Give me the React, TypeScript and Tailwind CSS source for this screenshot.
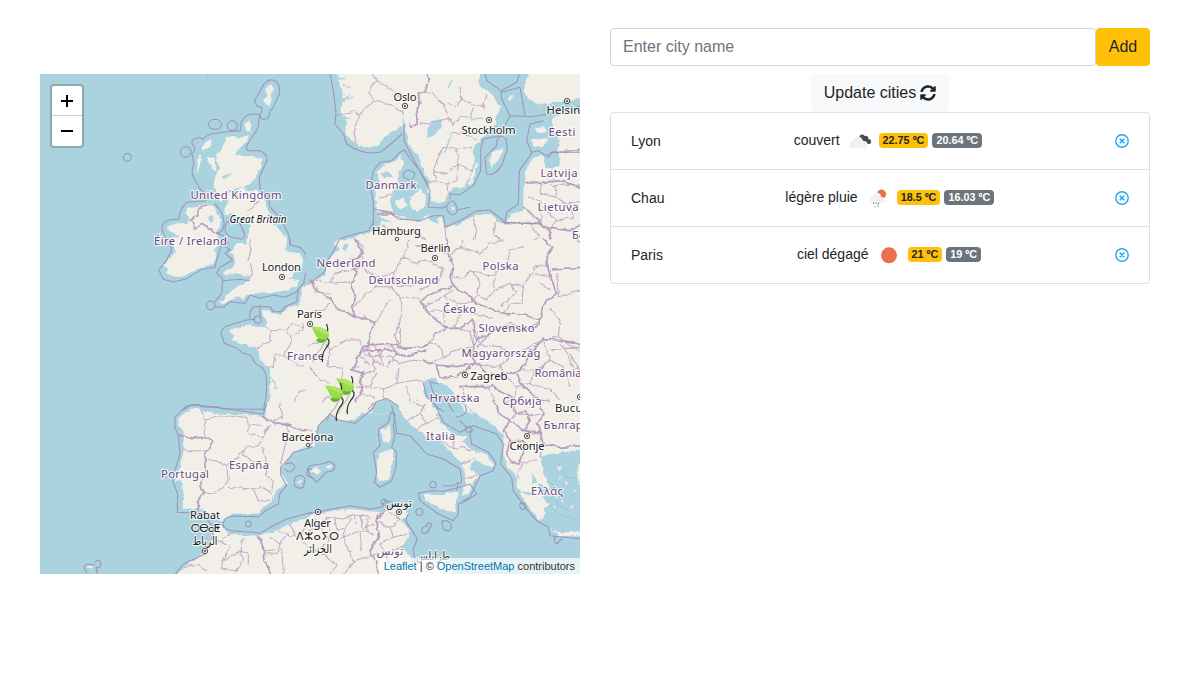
import React from "react";
import { FaSyncAlt } from "react-icons/fa";

const Tile = ({ x, y, land, water, sea, border, strong, rivers }: {
  x: number; y: number; land: string; water?: string; sea: string; border: string; strong?: string; rivers?: string;
}) => (
  <g transform={`translate(${x} ${y})`} fill="none" strokeLinejoin="round" strokeLinecap="round">
    <g filter="url(#coast)">
      <path d={land} fill="#f2efe9" />
      {water && <path d={water} fill="#aad3df" />}
      {rivers && <path d={rivers} stroke="#aad3df" strokeWidth="4" />}
      <path d={border} stroke="#c5abc8" strokeWidth="3.2" />
      {strong && <path d={strong} stroke="#b79dbb" strokeWidth="5" />}
    </g>
    <path d={sea} stroke="#998fb2" strokeWidth="3.2" strokeOpacity=".9" />
  </g>
);

type Label = [string, number, number, number];

/* text, centre x, baseline, drawn width */
const countries: Label[] = [
  ["United Kingdom", 196, 125, 91],
  ["Éire / Ireland", 150.5, 171, 73],
  ["Danmark", 351, 115, 51],
  ["Nederland", 306, 193, 59],
  ["Deutschland", 363.5, 210, 70],
  ["Polska", 460.5, 196, 36],
  ["Česko", 419.5, 239, 33],
  ["Slovensko", 466.5, 258, 56],
  ["Magyarország", 461, 283, 79],
  ["France", 265.5, 286, 37],
  ["Hrvatska", 414.5, 328, 50],
  ["Србија", 482, 331, 39],
  ["România", 518, 303, 47],
  ["България", 530, 355, 53],
  ["Italia", 400.5, 366, 29],
  ["Ελλάς", 507, 421, 32],
  ["España", 209, 395, 40],
  ["Portugal", 145, 404, 48],
  ["Eesti", 522, 62, 27],
  ["Latvija", 519, 103, 37],
  ["Lietuva", 518, 137, 41],
  ["Беларусь", 557, 165, 50],
  ["تونس", 350, 480.5, 27],
];

const cities: Label[] = [
  ["Oslo", 365, 27, 23],
  ["Stockholm", 448.5, 60, 54],
  ["Helsinki", 528, 40, 43],
  ["Hamburg", 356.5, 161, 49],
  ["Berlin", 395.5, 178, 30],
  ["London", 241.5, 197, 39],
  ["Paris", 269.5, 244, 25],
  ["Zagreb", 449, 306, 37],
  ["Barcelona", 267.5, 367, 52],
  ["București", 541, 338, 52],
  ["Скопје", 487, 376, 35],
  ["Rabat", 165, 445, 30],
  ["ⵔⴱⴰⵟ", 165.5, 458, 30],
  ["الرباط", 165, 471, 25],
  ["Alger", 277.5, 453, 27],
  ["ⴷⵣⴰⵢⵔ", 277.5, 466, 43],
  ["الجزائر", 278, 479, 28],
  ["تونس", 359, 433, 26],
  ["طرابلس", 393, 486, 34],
  ["İzmir", 553, 409, 28],
];

const dots = [[365, 32], [449, 46], [527, 27], [357, 165, 1], [395, 184], [242, 203], [270, 250], [425, 301], [268, 371, 1], [540, 323], [487, 362], [165, 477], [278, 438], [359, 438]];

const Leaf = ({ x, y }: { x: number; y: number }) => (
  <g transform={`translate(${x} ${y})`}>
    <path d="M2 38Q5 29 10 25L14 17" fill="none" stroke="#777" strokeOpacity=".35" strokeWidth="1.6" />
    <path d="M15.500 0Q17.500 4 16.500 9Q15.500 14 18 17Q18.500 20 15 24Q10 31 11.500 38" fill="none" stroke="#303330" strokeWidth="1.2" />
    <path d="M5 16Q8 12.500 16 14.500Q14 19 9 19Q7 19 5 16Z" fill="#68b52f" />
    <path d="M0 2.500Q7 2.500 11 4Q18 6 18 10.500Q18.500 13.500 15 15Q8 16.500 5 12Q3 7 0 2.500Z" fill="#98dc48" />
    <path d="M0 2.500Q7 2.500 11 4Q17 6 18 10.500Q10 9 0 2.500Z" fill="#b0e565" />
  </g>
);

const EuropeMap = () => (
  <svg width="540" height="500" viewBox="0 0 540 500" className="block">
    <defs>
      <filter id="coast" x="-20" y="-20" width="870" height="560" filterUnits="userSpaceOnUse" colorInterpolationFilters="sRGB">
        <feTurbulence type="fractalNoise" baseFrequency="0.05" numOctaves="2" seed="4" />
        <feDisplacementMap in="SourceGraphic" scale="14" xChannelSelector="R" yChannelSelector="G" />
      </filter>
    </defs>
    <rect width="540" height="500" fill="#aad3df" />
    <g transform="scale(.333333)">
      <g>
        <Tile x={0} y={0}
          land="M680 40L690 32L702 44L694 60L688 98L678 86L670 78L680 68ZM615 148L628 140L634 150L630 175L618 172ZM560 188L600 190L626 182L622 200L600 222L584 240L600 246L640 246L668 252L664 280L648 306L636 324L610 340L620 352L650 350L672 372L680 400L690 420L705 455L735 485L745 515H620L625 480L634 455L612 440L600 430L570 420L556 425L552 400L566 380L556 370L540 385L535 360L520 330L528 300L540 280L528 262L532 240L545 225L552 205ZM517 195L508 215L492 232L484 222L500 202ZM478 245L484 246L480 272L472 300L472 275ZM500 245L520 250L530 290L518 285ZM580 440L584 444L575 458ZM440 405L470 398L500 388L525 400L530 420L545 440L540 460L530 470L535 515H395L385 500L400 490L420 485L395 475L382 460L410 448L440 450L452 430L436 418Z"
          water="M548 308L580 292L552 318ZM565 350L605 338L600 347L570 356ZM505 432L515 425L520 440L512 448Z"
          sea="M460 215Q448 200 470 192Q482 190 488 196Q505 180 525 178L590 170L600 172L604 145Q615 120 640 120L660 122M648 90Q640 80 650 70L672 30Q690 10 708 22Q722 35 718 60L700 100Q690 110 688 116Q690 135 672 136Q660 135 660 122Q668 110 665 100Q650 98 648 90M658 124L655 160L620 215Q615 230 630 230L660 230Q685 240 680 262L658 310L660 345Q690 370 690 400L720 430L745 480L752 510M460 215Q470 225 456 240L462 270Q452 290 460 310L480 345L498 362V380L440 385Q415 410 418 435L385 438Q365 445 366 465L375 490L392 505M525 390Q555 420 552 455Q550 475 530 478M560 445Q580 435 600 450L614 480Q612 498 600 495L575 490Q545 480 560 445M530 478L552 485L565 510"
          border="M656 378L640 400L620 412" strong="M500 392L478 402L470 425L452 440L465 462L490 448L510 465L530 478" />
        <Tile x={0} y={498}
          land="M738 -5L735 30L760 38L782 40L790 60L782 85L760 100L745 115L778 120L770 140L730 152L690 160L675 158L650 160L620 168L610 180L590 172L575 180L552 192L535 190L550 178L575 150L590 140L610 130L630 122L638 108L610 105L590 100L560 104L552 98L580 82L588 60L580 45L565 38L580 30L590 12L620 12V-5ZM400 -5L398 12L408 35L370 75L385 88L378 100L410 112L440 105L480 85L520 70L528 45L524 12L530 -5ZM825 135L785 140V165L778 195L745 200L735 215L720 222L700 222L690 212L668 210V225L678 235V262L650 260L620 255L600 262L570 268L565 275L582 285L575 300L610 312L645 322L655 338L660 360L690 385V440L682 520H825ZM450 512L455 506H480V512Z"
          rivers="M690 410L700 425L708 445"
          sea="M392 8L395 30L380 60L356 90L370 118L400 126L440 116L485 88L525 82L530 60L540 30L548 -5M560 0L556 20L570 30L555 40L578 60L540 82L530 100L548 115L545 160L525 185M524 200L550 202L570 185L615 190L630 165L660 175L700 165L735 172L770 155L790 130L800 90L795 38L780 22L750 15L748 -5M548 122L600 118L628 122M630 235Q625 220 640 200L690 200L700 215H725L735 200L770 185L775 150L790 130L815 122M660 196V235M645 238L620 240L560 258Q545 265 543 280L553 310L590 325L610 340L632 345L645 370L665 382Q680 395 680 430L678 470L670 512M430 510L455 494H470L490 502L530 500L550 506L670 508"
          border="M630 0L632 30L624 60L638 85L636 108M678 262L690 272L740 270L755 250L785 260M690 272V305L650 325M740 275L755 290L750 315L730 345L705 345L700 380L688 380M730 345L760 365L780 378L815 375M720 510L725 495L765 488L775 455L815 445M755 290L785 270L790 250" />
        <Tile x={0} y={990}
          land="M675 40L620 32L560 30L495 25L480 15H455L415 42V60L428 80L430 130V160L420 190L405 232L425 240L430 260L428 315L470 312L500 322L520 345L548 350L570 332L655 328L670 310L700 290L710 258L745 238L722 212V195L745 160L770 140L825 122V-5H680ZM400 520L430 492L470 462L500 440L510 400L530 372L545 365L560 385L600 392L650 395L690 388L720 375L760 355L825 340V520ZM142 490L158 488L160 494L145 496ZM770 233L785 225L780 240Z"
          water="M410 230L425 228L428 245L415 250Z"
          sea="M670 30L540 12L470 2L440 5L405 40V70L415 95L420 150L408 190L398 230L413 270L412 325L470 328L500 345L520 370L540 355M550 370Q545 340 580 336L655 338L680 318L715 300L720 268L740 245L722 212L722 190L745 165L760 145L815 130M548 365Q560 380 590 382L640 385L660 388L690 370L740 345L815 325M402 515L430 480L495 450L520 390V360M670 30L680 0M165 475Q180 460 183 482Q180 495 168 490L172 510M165 482L140 480Q125 490 140 505M765 220Q785 205 795 225L790 250Q770 258 762 240ZM738 180Q760 170 765 190Q750 215 735 195M820 195Q795 190 802 215L820 222"
          border="M430 140H495M482 15L495 45L490 65L495 95M495 45L540 35L620 40L625 60L665 65M625 60V90L665 98L690 65M490 170L530 170L560 185L590 165L615 130L650 130L665 110L680 70M560 185L565 230L550 250L520 270L490 265M565 250L640 255L660 248L690 262L700 290M665 130L675 150L680 190V215L700 235L695 260M720 180L735 130L745 80L740 65M615 130L610 150L640 175L670 170M640 255L655 290L690 292M720 0L725 40L700 50M540 410L570 430L550 470L600 440L610 400M550 470L540 495L590 500L610 470L600 440L625 450V480M510 400L545 410L570 385M430 492L470 480L500 500M690 400L720 420L740 390L780 400L790 370M720 420L710 450H675M740 390L710 380M680 440L725 435L730 510M780 400L815 440M750 360L765 390"
          strong="M420 95L430 92L445 102L495 100L515 112L512 130L495 145V200L488 230L480 250L490 268L475 285V318M668 38L700 55L750 62L770 75L815 80M655 395L670 430L675 470L695 515" />
        <Tile x={810} y={0}
          land="M80 -10L85 30L100 60L92 110L110 150L108 185L140 210L170 222L200 215L225 190L250 170L275 155L285 165L290 190L300 215L320 240L335 270L345 300L362 325L355 350L365 385L400 388L415 355L440 340L465 340L480 310L490 270L492 220L520 190L555 150L570 100L545 60L510 40L505 -10ZM655 -10L650 30L640 50L655 75L690 90L740 85L825 70V-10ZM825 110L750 120L725 140L735 180L750 200L745 230L750 270L730 285L710 280L700 245L670 250L645 290L640 350V410L600 420L590 445L560 440L545 420L490 425L440 455L405 460L395 430L370 440L350 425L320 445L270 430L250 415L210 410V450L200 470L130 490L90 500L70 515H825ZM200 415L195 350L210 320L200 290L225 270L255 265L270 240L280 260L275 285L262 300L265 320L250 350L240 380L250 420ZM675 165L705 155L710 175L680 178ZM665 200L715 190L705 215L675 218ZM252 380L280 372L290 395L270 410ZM300 370L330 345L348 365L345 400L320 410L300 395ZM545 235L580 222L570 250L545 285L538 260ZM498 265L504 270L482 335L476 330ZM590 70L610 65L600 82ZM422 398L435 400L430 410ZM255 425L290 428L275 438Z"
          water="M350 165L370 140L395 135L398 155L380 175L355 195ZM210 300L230 292L250 304L225 310ZM80 15L115 10L88 22ZM90 75L120 60L98 88ZM95 125L125 130L98 138ZM200 420L245 445L210 440ZM350 420L380 435L385 450L360 440Z"
          rivers="M424 180L405 235M278 130L282 165M120 40L100 35M110 75L130 70M425 20L415 40M480 135L520 132"
          sea="M60 -5L70 50L78 115L75 150L100 180L110 210Q160 245 210 235Q240 215 275 180M282 150V200L315 265L345 320L360 350L355 400M190 460V385L182 340L190 290L210 265L245 260L270 235L285 228L300 255L330 290L350 325M355 400L400 402L410 395M420 375V360L450 362L490 335L512 290V225L520 195L570 185L600 125M530 300L525 250L560 215L562 195Q575 180 588 195L592 225L575 275Q550 310 530 300M600 125L575 75L573 50L530 20L525 -5M573 50L620 25L630 -5M573 55L630 40L645 125M600 125L660 128L740 118L815 95M700 140L660 150L650 200L665 235L685 230L715 250L725 235H815M665 238L628 290L625 390L590 415L585 445L540 408L500 410L460 435L405 460L400 425L370 425L330 440L265 435L240 415L190 405M190 445L175 470L100 490L70 515M585 445L695 450M410 395Q430 365 440 400Q445 422 425 422Q410 415 410 395M480 400L440 408M280 295Q300 280 315 300L305 320L280 310Z"
          border="M80 125L130 115L150 120L190 80L175 50L200 20L190 0M150 120L130 170L140 210M190 80L240 90L280 120M200 20L250 50L270 75M370 60L400 90L415 130L380 145L330 150M370 60L345 50M415 90L445 95L455 75L490 90L520 100L530 60M455 75L450 40M415 130L430 155L450 130H480L490 100M425 180L460 175L500 200M400 220L440 225L445 270L400 300L370 290L380 260L400 220M445 225L485 220M445 270L490 290M370 290L378 320L410 330L440 320L445 270M355 325H378M410 330L415 355M645 330L690 325L735 335L760 330L810 335M690 325L695 360L740 370L735 335M655 370L690 380L695 450M740 370L770 390L815 385M700 400L740 440L790 430L780 390M210 370L245 360M215 455L260 470L320 475L360 510M405 460L410 515M490 425L500 470L490 510M560 440L550 480L580 510M660 445L690 490L640 510M740 440L720 470"
          strong="M350 -5L358 15L345 50L325 60L330 90L318 110L322 150L302 160L300 150M645 325L690 325L760 320L815 345M640 400L690 440L700 460L780 470L815 450M695 450L720 475L725 515M255 420L205 420M580 445L695 450M710 240L815 225" />
        <Tile x={810} y={498}
          land="M-10 0H820V520H-10Z"
          water="M-12 -15H90L75 10L85 30L55 60L45 110L5 120L-12 137ZM105 10L115 15L105 35L95 30ZM340 425L375 410L385 430L410 435L430 460L470 520H395L370 500L345 470ZM185 520L195 490L230 475L265 495L275 520ZM135 378L150 374L145 382L135 385ZM225 315L242 318L235 323Z"
          rivers="M130 390L140 380M260 400L258 418M480 300L490 295M370 460L390 475M150 350L160 355"
          sea="M90 -5L70 35L50 65L45 95L5 125L-5 132M340 430L350 470L380 500L400 515M385 432L360 425L370 460L405 475L430 515M180 515L200 485L230 475L268 500"
          border="M135 0L160 20L155 50L120 60M10 120L60 130L120 125M60 130L75 100L120 90M125 90L160 80L190 110L250 100L280 50L300 0M160 80L150 20M190 110L200 140L160 170L130 200M200 140L240 140L270 170L330 175M280 50L320 70L345 60L400 85L390 120L330 150M320 20L370 15L410 45M250 100L260 135L300 140L330 120M160 225L165 240L190 240M240 180L220 210L200 245M270 170L275 230L265 250L272 290L265 320M415 50L450 20L460 0M450 20L510 40L540 10L580 0M420 110L455 115L485 90L540 110L590 80L600 30L640 20M485 90L510 130L500 165L530 180L555 150L600 130L640 140L665 100L720 110M555 110L550 150M600 130L620 155L575 200M640 140L635 190L600 190L580 220M665 100L675 80L710 75M500 165L485 190M330 180L345 200L400 170L430 150M400 170L440 190L480 185M360 215L400 210L490 220L550 235M400 210L405 250M440 190L450 230L430 260M360 310L390 315L400 350L440 330L490 320M430 260L480 275L490 320M170 320L190 360L230 380L260 340L240 310M160 345L240 350L270 370M190 360L195 390L150 410M195 320L215 360M270 370L310 360L360 370L400 350M200 400L180 440L220 450L260 430L320 420L340 425M260 430L270 380M140 440L180 440M-5 315L45 300L60 330L110 300L150 300L155 330L185 330M60 330L50 380L100 385M100 385L90 450L50 470L20 510M0 220L40 210L60 190M0 380L30 420L60 430M150 460L190 475M500 320L550 270L600 250L650 270L690 240M500 275L510 315L570 320L600 350L570 380L500 375M600 350L640 330L700 300M570 380L590 410L620 440L660 430L670 400L720 360L760 380L780 440M700 300L720 360L690 390L630 390M720 210L750 240L745 290L700 300M745 290L815 340M740 100L745 170L815 150M620 440L610 480L660 490L720 510M450 440L480 490L530 500M540 445L560 490L610 480M660 430L720 450L760 490L815 480M750 310L800 370L815 410M180 325L175 350L205 345L225 325M205 345L220 370M165 360L185 375M270 240L255 290L268 320M15 155L60 160M690 130L720 150M720 330L815 320M775 350L790 390L815 385M320 480L350 500M290 440L300 480L280 515M220 450L225 475"
          strong="M410 0L415 45L430 75L420 110L430 140L390 150L340 175L335 190L350 215L380 240L410 265L375 280L360 310L345 320L285 325L240 310L190 315L160 320L145 350L125 390L160 400L150 420L160 450L135 480L160 515M430 140L470 160L500 190L540 205L580 220L640 225L690 240L680 260L640 270L590 260L550 275L500 300L490 270L490 240L450 265L410 265M500 300L480 345L500 370L530 400L570 410L630 390L660 345L700 295L740 300L815 310M0 120L30 160L60 175L80 205L115 220L135 230L170 240L195 245L180 280L175 320M135 -5L160 40L125 65L140 100L125 130L135 180L125 200L135 230M700 -5L725 20L710 60L720 110L740 160L700 190L690 240M725 90L815 85M160 335L240 330L280 350L350 330M340 360L380 375L440 380L500 370M380 380L390 415L440 410L480 380M450 440L550 440L600 470L650 510M620 400L640 440L690 480L815 500M800 -5L815 10" />
        <Tile x={810} y={990}
          land="M-10 -5V75L20 80L35 50L60 35L90 50L130 50L165 20L190 5V-5ZM262 -10L270 20L290 50L320 75L350 100L390 110L410 130L430 150L455 180L465 210V240L455 275L475 270L490 240L505 215L480 195L490 170L530 185L545 192L550 180L530 155L480 135L455 110L470 100L430 90L400 65L375 25L360 -10ZM460 -10L480 10L510 40L560 70L580 95V150L590 185L620 215V250L650 300L680 340L700 345L705 310L720 300L690 270L680 240L720 250L700 200L690 160L720 150L760 145L825 135V-10ZM720 375L750 385L825 385L812 398L750 395ZM240 60L243 100L235 120L220 110L213 80L232 70ZM250 135L248 180L240 220L205 235L200 205L205 150L230 140ZM345 270L400 270L448 262L435 300L438 325L410 320L345 290ZM0 200L20 185L38 200L22 215ZM50 185L62 183L65 193L55 194ZM-10 340L40 325L120 315L170 320L220 325L230 308L265 312L285 310L295 330L275 350L300 380L290 410L275 430L300 455L310 480L350 470L420 475L430 520H-10ZM700 250L740 265L745 285L720 270ZM740 190L755 185L750 200ZM765 230L775 235L770 245ZM805 180H825V240L802 225ZM780 310L790 300L785 315ZM750 215L758 218L752 224ZM730 305L738 310L730 316ZM790 255L797 260L790 264ZM755 290L762 292L758 298Z"
          water="M670 205L682 235L665 240ZM700 180L730 165L740 175L710 185ZM628 262L680 268L660 276Z"
          rivers="M455 -5L490 25L520 50"
          sea="M-5 130L20 100L25 65L60 30L85 48L135 58L190 12M0 215L-8 195L0 185L45 178Q60 165 75 185Q75 205 50 203L20 235L0 215M207 75L235 55L243 25L255 30L250 70L255 95L245 130L260 145L258 190L245 230L210 250L193 235L200 205L190 145L210 125L205 90ZM245 5L255 50L260 88L300 95L350 150L400 165L450 195L455 225L452 240M325 268L360 260L400 262L450 250L480 240L500 270L460 295L445 300V330L430 350L385 330L330 290ZM375 0L400 55L450 85L490 65L560 90L580 120L572 180L605 220L610 260L645 310L680 350L715 370L720 395L815 405M490 75L480 90L485 120L535 145L558 175L550 200L510 215L480 280L460 290M450 50L470 70M-5 330L40 320L120 305L180 315L215 310L225 290L250 295M295 330Q280 350 300 370L322 405L310 435L315 470M400 245L430 245L445 235L440 260M220 305Q205 290 222 285Q240 290 225 305M350 368Q335 365 335 385Q355 395 358 370Q370 365 362 358Q348 355 350 368M395 352Q415 345 425 365Q420 390 400 375ZM630 300Q645 290 650 310Q635 325 628 305M440 40Q480 30 465 5M735 400Q730 415 740 420L755 405"
          border="M290 50L330 30L345 0M330 30L350 55L385 45M320 75L350 55M395 110L430 135L455 130L480 140M455 180L490 165M430 90L430 135M310 -5L340 10M465 225L500 215M600 50L620 30L660 35L700 30M620 30L610 0M630 190L640 175L680 170M630 190L625 225M690 160L700 120M-5 380L30 370L50 340L100 345L130 330L180 340M30 370L60 410L100 400L120 340M60 410L20 440L-5 430M100 400L150 380L190 390M100 400L130 470L200 450M130 470L100 510M50 340L60 380M150 380L155 440M195 350L240 370L270 345L230 320L195 350M240 370L250 400L210 420M250 400L290 390M210 420L230 450L280 425M230 450L240 480L300 470M150 335L160 375L190 360M20 440L80 480L60 510M15 345L20 375M75 345L80 375L105 370M130 330L140 360M170 345L175 385"
          strong="M195 -5L175 15M550 -10L570 30L600 50L580 80L600 110L590 150L600 175L625 180L645 130L640 110L600 110M600 50L640 80L690 85L700 120L650 125M690 85L680 60L700 30L690 0M700 120L750 130L820 125M590 -5L620 30L650 20L660 50L640 80M225 320L200 340L205 400L180 440L200 480L205 515" />
      </g>
      <g fill="none" stroke="#998fb2" strokeWidth="3">
        <ellipse cx="525" cy="151" rx="20" ry="15" />
        <circle cx="577" cy="155" r="15" />
        <circle cx="437" cy="234" r="16" />
        <circle cx="262" cy="250" r="12" />
        <circle cx="512" cy="694" r="13" />
        <circle cx="653" cy="737" r="11" />
        <circle cx="625" cy="1350" r="9" />
        <circle cx="1179" cy="1232" r="10" />
        <circle cx="1138" cy="1314" r="11" />
        <circle cx="1285" cy="1066" r="9" />
        <path d="M498 -2Q503 4 508 -2" />
        <path d="M1520 1220L1560 1250L1550 1290L1590 1310M1555 1170L1580 1210L1620 1215M1530 1290L1555 1320L1620 1340" strokeWidth="2" strokeOpacity=".4" />
      </g>
    </g>
    <g fontFamily="'Noto Sans', 'DejaVu Sans', sans-serif" textAnchor="middle" stroke="#fff" strokeOpacity=".75" strokeWidth="2.4" strokeLinejoin="round" paintOrder="stroke" fontSize="11.3">
      <g fill="#6b4a7c">
        {countries.map(([t, x, y, w]) => <text key={t} x={x} y={y} textLength={w}>{t}</text>)}
      </g>
      <text x="218" y="149" fontSize="10" fontStyle="italic" fill="#111" textLength="57">Great Britain</text>
      <g fill="#222">
        {cities.map(([t, x, y, w]) => <text key={t} x={x} y={y} textLength={w} lengthAdjust={/[\u0600-\u06ff]/.test(t) ? "spacingAndGlyphs" : "spacing"}>{t}</text>)}
      </g>
    </g>
    {dots.map(([x, y, small], i) => (
      <g key={i}>
        <circle cx={x} cy={y} r={small ? 1.7 : 2.7} fill="#f2efe9" stroke="#444" strokeWidth=".9" />
        {!small && <circle cx={x} cy={y} r="1.1" fill="#444" />}
      </g>
    ))}
    <Leaf x={271} y={250} />
    <Leaf x={296} y={302} />
    <Leaf x={285} y={309} />
  </svg>
);

const Cloudy = () => (
  <svg width="30" height="30" viewBox="0 0 30 30">
    <g fill="#4b4b4b"><circle cx="17" cy="12" r="2.6" /><circle cx="20.5" cy="13.5" r="2.8" /><circle cx="23.500" cy="16.5" r="2.6" /><path d="M15 13L22 19L24 17L20 11Z" /></g>
    <g fill="#f1f1f1"><circle cx="7.500" cy="19.500" r="3.5" /><circle cx="13" cy="16.5" r="4.8" /><circle cx="19" cy="19.500" r="3.5" /><path d="M7.500 17H19.500V23H7.500Z" /></g>
  </svg>
);

const Rainy = () => (
  <svg width="30" height="30" viewBox="0 0 30 30">
    <circle cx="18.5" cy="12.2" r="4.6" fill="#ec6e4c" />
    <g fill="#f1f1f1"><circle cx="10" cy="17.5" r="3" /><circle cx="14" cy="15" r="4.2" /><circle cx="19" cy="18" r="3" /><path d="M10 15.5H19V20.5H10Z" /></g>
    <path d="M10.5 20.5L11 22M13.5 20.5L13 22M16 20.5L15 22.5M11.5 24.5L12.5 25M15 23.5V25" stroke="#777" strokeWidth="1" />
  </svg>
);

const Clear = () => (
  <svg width="30" height="30" viewBox="0 0 30 30"><circle cx="15" cy="16.3" r="8" fill="#ec6e4c" /></svg>
);

const CloseIcon = () => (
  <svg width="14" height="14" viewBox="0 0 14 14" fill="none" stroke="#1ea7f5">
    <circle cx="7" cy="7" r="6.2" strokeWidth="1.4" />
    <path d="M4.8 4.8L9.2 9.2M9.2 4.8L4.8 9.2" strokeWidth="1.6" />
  </svg>
);

const rows = [
  { city: "Lyon", sky: "couvert", icon: <Cloudy />, temp: "22.75 ºC", feels: "20.64 ºC" },
  { city: "Chau", sky: "légère pluie", icon: <Rainy />, temp: "18.5 ºC", feels: "16.03 ºC" },
  { city: "Paris", sky: "ciel dégagé", icon: <Clear />, temp: "21 ºC", feels: "19 ºC" },
];

export default function App() {
  return (
    <main className="flex h-[683px] w-[1178px] gap-[30px] overflow-hidden bg-white pl-10 font-['Liberation_Sans',Arial,sans-serif] text-[#212529]">
      <section className="relative mt-[74px] h-[500px] w-[540px] shrink-0 overflow-hidden">
        <EuropeMap />
        <div className="absolute left-[10px] top-[10px] flex w-[34px] flex-col overflow-hidden rounded-[4px] border-2 border-black/20 bg-clip-padding">
          <button aria-label="Zoom in" className="flex h-[30px] items-center justify-center border-b border-[#ccc] bg-white">
            <svg width="14" height="14" viewBox="0 0 14 14"><path d="M1 7H13M7 1V13" stroke="#000" strokeWidth="2" /></svg>
          </button>
          <button aria-label="Zoom out" className="flex h-[30px] items-center justify-center bg-white">
            <svg width="14" height="14" viewBox="0 0 14 14"><path d="M1 7H13" stroke="#000" strokeWidth="2" /></svg>
          </button>
        </div>
        <div className="absolute bottom-0 right-0 whitespace-nowrap bg-white/70 px-[5px] text-[11px] leading-4 text-[#333]">
          <span className="text-[#0078a8]">Leaflet</span> | © <span className="text-[#0078a8]">OpenStreetMap</span> contributors
        </div>
      </section>

      <section className="flex w-[540px] shrink-0 flex-col pt-7">
        <form className="flex h-[38px]">
          <input placeholder="Enter city name" className="min-w-0 flex-1 rounded-[4px] border border-[#ced4da] px-3 text-base placeholder:text-[#6c757d]" />
          <button type="button" className="w-[54px] rounded-[4px] bg-[#ffc107] text-base">Add</button>
        </form>
        <button className="mt-2 flex h-[38px] w-[138px] items-center justify-center gap-1 self-center rounded-[4px] bg-[#f8f9fa] text-base">
          Update cities <FaSyncAlt size={16} />
        </button>
        <ul className="rounded-[4px] border border-[#dfdfdf] text-sm">
          {rows.map((r) => (
            <li key={r.city} className="flex h-[57px] items-center justify-between border-b border-[#dfdfdf] px-5 last:h-[56px] last:border-b-0">
              <span className="pb-px">{r.city}</span>
              <div className="flex items-center gap-1 pb-[2px]">
                <span className="mr-px">{r.sky}</span>
                {r.icon}
                <span className="rounded-[4px] bg-[#ffc107] px-1 text-[10.8px] font-bold leading-[15px]">{r.temp}</span>
                <span className="rounded-[4px] bg-[#6c757d] px-1 text-[10.8px] font-bold leading-[15px] text-white">{r.feels}</span>
              </div>
              <CloseIcon />
            </li>
          ))}
        </ul>
      </section>
    </main>
  );
}
